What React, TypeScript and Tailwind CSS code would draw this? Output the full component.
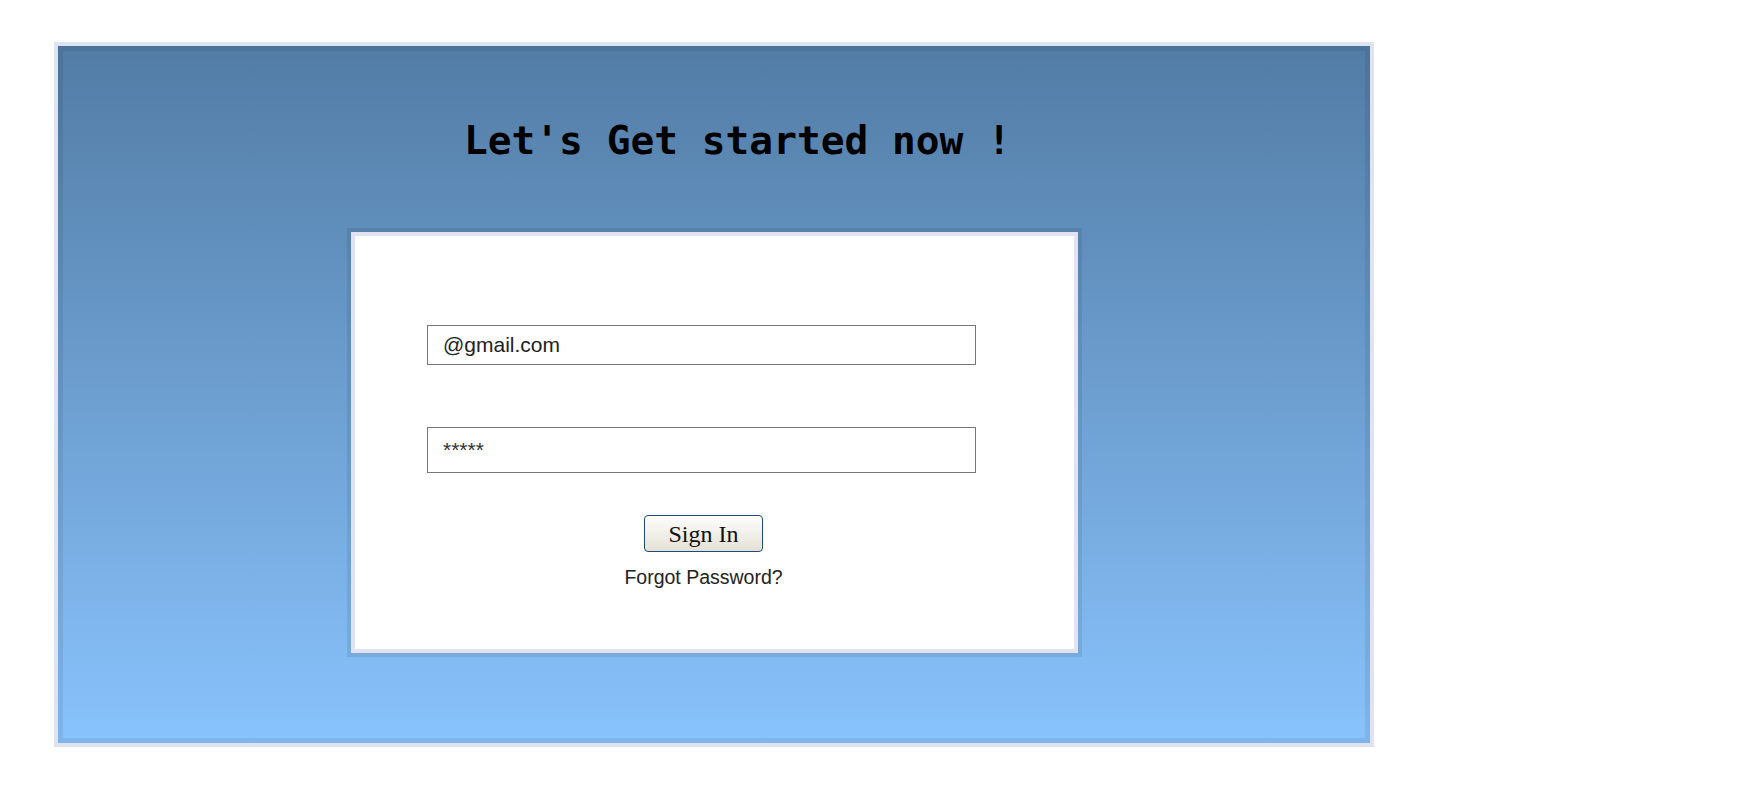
export default function App() {
  return (
    <div className="min-h-screen bg-white pt-[42px] pl-[54px]">
      {/* outer frame */}
      <div className="w-[1320px] h-[705px] border-4 border-[#dfe3ef] flex">
        <div className="flex-1 flex flex-col border-[5px] border-black/[0.07] bg-origin-border bg-gradient-to-b from-[#527ca5] to-[#89c3fd]">
          <h1 className="pl-[401px] pt-[65px] text-[39.5px] leading-[48px] font-bold text-black font-['DejaVu_Sans_Mono',monospace] whitespace-pre">
            Let's Get started now !
          </h1>

          {/* card */}
          <div className="ml-[284px] mt-[64px] w-[735px] h-[429px] border-4 border-black/[0.08]">
            <div className="h-full border-4 border-[#e1e4f0] bg-white flex flex-col font-['Liberation_Sans',Arial,sans-serif]">
              <input
                type="text"
                defaultValue="@gmail.com"
                className="ml-[72px] mt-[89px] w-[549px] h-[40px] border border-[#767676] px-[15px] text-[21px] text-[#222] outline-none"
              />
              <input
                type="text"
                defaultValue="*****"
                className="ml-[72px] mt-[62px] w-[549px] h-[46px] border border-[#767676] px-[15px] text-[21px] text-[#333] outline-none"
              />
              <div className="w-[697px] flex flex-col items-center">
                <button className="mt-[42px] w-[119px] h-[37px] rounded-[4px] border border-[#1d4b7f] bg-gradient-to-b from-[#fdfdfc] to-[#e4e1d6] text-[24px] text-[#111] font-['Liberation_Serif','Times_New_Roman',serif] leading-none">
                  Sign In
                </button>
                <div className="mt-[14px] text-[19.5px] leading-[22px] text-[#222]">
                  Forgot Password?
                </div>
              </div>
            </div>
          </div>
        </div>
      </div>
    </div>
  );
}
